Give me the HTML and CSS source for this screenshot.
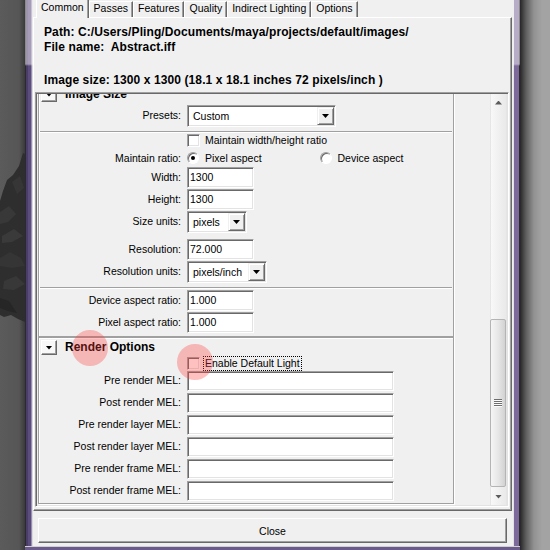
FILE: index.html
```html
<!DOCTYPE html>
<html lang="en">
<head>
    <meta charset="UTF-8">
    <title>Render Settings</title>
    <link rel="stylesheet" href="styles.css">
</head>
<body>
    <div class="desk">
        <div class="desk-left">
            <!-- dark flower peeking out behind the window -->
            <svg class="flower" width="25" height="550" viewBox="0 0 25 550">
                <polygon points="23,153 25,154 25,322 18,319 11,315 4,317 0,315 0,201 3,191 7,180 13,175 19,166" fill="#2e2e2e"/>
                <polygon points="0,212 9,206 16,214 8,222 0,224" fill="#383838"/>
                <polygon points="2,236 14,229 23,236 12,242 2,243" fill="#3a3a3a"/>
                <polygon points="0,258 10,252 21,258 25,266 12,268 0,266" fill="#353535"/>
                <polygon points="4,281 16,276 25,284 14,290 3,289" fill="#383838"/>
                <polygon points="0,298 9,301 17,313 8,311 0,308" fill="#262626"/>
                <polygon points="12,182 20,176 24,188 17,194" fill="#363636"/>
            </svg>
        </div>

        <div class="win">
            <div class="win-body">
                <div class="edge edge-l"></div>

                <div class="client">
                    <div class="tabs">
                        <div class="tab active">Common</div>
                        <div class="tab">Passes</div>
                        <div class="tab">Features</div>
                        <div class="tab">Quality</div>
                        <div class="tab">Indirect Lighting</div>
                        <div class="tab">Options</div>
                    </div>

                    <div class="page">
                        <div class="info">
                            <p>Path: C:/Users/Pling/Documents/maya/projects/default/images/</p>
                            <p>File name:&nbsp; Abstract.iff</p>
                            <p class="size-line">Image size: 1300 x 1300 (18.1 x 18.1 inches 72 pixels/inch )</p>
                        </div>

                        <div class="scroll">
                            <div class="scroll-view">
                                <div class="scroll-content">

                                    <div class="frame">
                                        <div class="frame-head">
                                            <div class="fold"><i class="tri"></i></div>
                                            <span class="frame-title">Image Size</span>
                                        </div>
                                        <div class="section presets">
                                            <div class="row">
                                                <span class="label">Presets:</span>
                                                <div class="combo w-presets">
                                                    <span class="combo-text">Custom</span>
                                                    <span class="combo-btn"><i class="tri"></i></span>
                                                </div>
                                            </div>
                                        </div>
                                        <div class="section sep dims">
                                            <div class="row r-check">
                                                <span class="label"></span>
                                                <span class="check"></span>
                                                <span class="cap">Maintain width/height ratio</span>
                                            </div>
                                            <div class="row r-radio">
                                                <span class="label">Maintain ratio:</span>
                                                <span class="opt">
                                                    <span class="radio on"></span>
                                                    <span class="cap">Pixel aspect</span>
                                                </span>
                                                <span class="opt">
                                                    <span class="radio"></span>
                                                    <span class="cap">Device aspect</span>
                                                </span>
                                            </div>
                                            <div class="row">
                                                <span class="label">Width:</span>
                                                <span class="field w-num">1300</span>
                                            </div>
                                            <div class="row">
                                                <span class="label">Height:</span>
                                                <span class="field w-num">1300</span>
                                            </div>
                                            <div class="row">
                                                <span class="label">Size units:</span>
                                                <div class="combo w-units">
                                                    <span class="combo-text">pixels</span>
                                                    <span class="combo-btn"><i class="tri"></i></span>
                                                </div>
                                            </div>
                                            <div class="row gap-top">
                                                <span class="label">Resolution:</span>
                                                <span class="field w-num">72.000</span>
                                            </div>
                                            <div class="row">
                                                <span class="label">Resolution units:</span>
                                                <div class="combo w-resunits">
                                                    <span class="combo-text">pixels/inch</span>
                                                    <span class="combo-btn"><i class="tri"></i></span>
                                                </div>
                                            </div>
                                        </div>
                                        <div class="section sep aspect">
                                            <div class="row">
                                                <span class="label">Device aspect ratio:</span>
                                                <span class="field w-num">1.000</span>
                                            </div>
                                            <div class="row">
                                                <span class="label">Pixel aspect ratio:</span>
                                                <span class="field w-num">1.000</span>
                                            </div>
                                        </div>
                                    </div>

                                    <div class="frame">
                                        <div class="frame-head">
                                            <div class="fold"><i class="tri"></i></div>
                                            <span class="frame-title">Render Options</span>
                                        </div>
                                        <div class="row r-light">
                                            <span class="label"></span>
                                            <span class="check"></span>
                                            <span class="cap focus">Enable Default Light</span>
                                        </div>
                                        <div class="row mel">
                                            <span class="label">Pre render MEL:</span>
                                            <span class="field w-mel"></span>
                                        </div>
                                        <div class="row mel">
                                            <span class="label">Post render MEL:</span>
                                            <span class="field w-mel"></span>
                                        </div>
                                        <div class="row mel">
                                            <span class="label">Pre render layer MEL:</span>
                                            <span class="field w-mel"></span>
                                        </div>
                                        <div class="row mel">
                                            <span class="label">Post render layer MEL:</span>
                                            <span class="field w-mel"></span>
                                        </div>
                                        <div class="row mel">
                                            <span class="label">Pre render frame MEL:</span>
                                            <span class="field w-mel"></span>
                                        </div>
                                        <div class="row mel">
                                            <span class="label">Post render frame MEL:</span>
                                            <span class="field w-mel"></span>
                                        </div>
                                    </div>

                                </div>
                            </div>

                            <div class="vbar">
                                <div class="vbar-btn"><i class="arrow up"></i></div>
                                <div class="vbar-gap"></div>
                                <div class="thumb"><i class="grip"></i></div>
                                <div class="vbar-rest"></div>
                                <div class="vbar-btn"><i class="arrow"></i></div>
                            </div>
                        </div>
                    </div>

                    <div class="close-row">
                        <button class="btn">Close</button>
                    </div>
                </div>

                <div class="edge edge-r"></div>
            </div>
            <div class="win-bottom"></div>
        </div>

        <div class="desk-right"></div>
    </div>

    <!-- click markers from the screen recorder -->
    <div class="click c1"></div>
    <div class="click c2"></div>
</body>
</html>
```

FILE: styles.css
```css
body {
    margin: 0;
    font-family: 'Liberation Sans', Arial, sans-serif;
    font-size: 10.5px;
    color: #000;
    background: #5a5a5a;
}

.desk {
    display: flex;
    width: 550px;
    height: 550px;
    overflow: hidden;
}

.desk-left {
    width: 25px;
    flex: none;
    background: linear-gradient(to right, #5b5b5b 0, #565656 19px, #3a3a3a 25px);
}

.flower {
    display: block;
}

.desk-right {
    width: 30px;
    flex: none;
    background: linear-gradient(to right, #262626 0, #5e5e5e 6px, #929292 14px, #a3a3a3 22px, #a3a3a3 100%);
}

/* window chrome */
.win {
    width: 495px;
    flex: none;
    display: flex;
    flex-direction: column;
}

.win-body {
    display: flex;
    flex: 1;
}

.edge {
    flex: none;
}

.edge-l {
    width: 8px;
    background:
        linear-gradient(to bottom, rgba(255,255,255,0.45) 0, rgba(255,255,255,0.45) 64px, rgba(255,255,255,0) 66px),
        linear-gradient(to right, #2d2934 0 1px, #4a3e66 1px 3px, #5b4d7d 3px 6px, #978fab 6px 7px, #dadada 7px 8px);
}

.edge-r {
    width: 7px;
    background:
        linear-gradient(to bottom, rgba(255,255,255,0.45) 0, rgba(255,255,255,0.45) 64px, rgba(255,255,255,0) 66px),
        linear-gradient(to right, #e2e2e2 0 1px, #7d6a9a 1px 6px, #2a2a2a 6px 7px);
}

.win-bottom {
    height: 4px;
    background: linear-gradient(to bottom, #cfcfcf 0 1px, #6b5a8c 1px);
}

.client {
    width: 480px;
    flex: none;
    display: flex;
    flex-direction: column;
    background: #f0f0f0;
}

/* tab strip */
.tabs {
    display: flex;
    align-items: flex-end;
    height: 17px;
    padding-left: 3px;
}

.tab {
    height: 15px;
    line-height: 13px;
    padding: 0 4px;
    border-top: 1px solid #fff;
    border-left: 1px solid #fff;
    border-right: 1px solid #696969;
    box-shadow: inset -1px 0 0 #a0a0a0;
    white-space: nowrap;
}

.tab.active {
    position: relative;
    z-index: 1;
    height: 18px;
    line-height: 14px;
    margin-bottom: -1px;
    background: #f0f0f0;
}

.page {
    box-sizing: border-box;
    width: 479px;
    height: 494px;
    border-top: 1px solid #fff;
    border-left: 1px solid #fff;
    border-right: 1px solid #696969;
    border-bottom: 1px solid #696969;
    box-shadow: inset -1px -1px 0 #a0a0a0;
}

.info {
    padding: 7px 0 0 10px;
    font-size: 12px;
    font-weight: bold;
    line-height: 15px;
    letter-spacing: 0.1px;
}

.info p {
    margin: 0;
}

.info .size-line {
    margin-top: 18px;
}

/* sunken scroll area */
.scroll {
    box-sizing: border-box;
    display: flex;
    width: 474px;
    height: 415px;
    margin: 4px 0 0 1px;
    padding: 1px;
    border: 1px solid;
    border-color: #a0a0a0 #fff #fff #a0a0a0;
    box-shadow: inset 1px 1px 0 #696969, inset -1px -1px 0 #e3e3e3;
}

.scroll-view {
    flex: 1;
    overflow: hidden;
    padding-left: 1px;
}

.scroll-content {
    width: 416px;
    margin-top: -10px;
}

.vbar {
    width: 17px;
    flex: none;
    display: flex;
    flex-direction: column;
    background: linear-gradient(to right, #e6e6e6 0 1px, #f8f8f8 1px, #f0f0f0 9px, #e9e9e9 16px, #e2e2e2 17px);
}

.vbar-btn {
    height: 17px;
    display: flex;
    align-items: center;
    justify-content: center;
}

.vbar-gap {
    height: 208px;
}

.vbar-rest {
    flex: 1;
}

.thumb {
    box-sizing: border-box;
    width: 16px;
    height: 168px;
    border: 1px solid #b4b4b4;
    border-radius: 2px;
    background: linear-gradient(to right, #f5f5f5, #e7e7e7 50%, #d2d2d2);
    display: flex;
    align-items: center;
    justify-content: center;
}

.grip {
    display: block;
    width: 8px;
    height: 8px;
    background: repeating-linear-gradient(to bottom, #6e6e6e 0 1px, #fbfbfb 1px 2px);
}

.arrow {
    display: block;
    width: 7px;
    height: 4px;
    background: #5c5c5c;
    clip-path: polygon(0 0, 100% 0, 50% 100%);
}

.arrow.up {
    clip-path: polygon(50% 0, 100% 100%, 0 100%);
}

/* collapsible frames */
.frame {
    padding: 1px;
    border: 1px solid #a0a0a0;
    box-shadow: inset 1px 1px 0 #fff, 1px 1px 0 #fff;
}

.frame-head {
    display: flex;
    height: 17px;
}

.fold {
    box-sizing: border-box;
    width: 16px;
    height: 15px;
    margin: 1px 0 0 1px;
    border: 1px solid;
    border-color: #fff #696969 #696969 #fff;
    box-shadow: inset -1px -1px 0 #a0a0a0;
    background: #f8f8f8;
    display: flex;
    align-items: center;
    justify-content: center;
}

.tri {
    display: block;
    width: 7px;
    height: 4px;
    background: #000;
    clip-path: polygon(0 0, 100% 0, 50% 100%);
}

.frame-title {
    margin-left: 8px;
    font-size: 12px;
    font-weight: bold;
    line-height: 16px;
}

.sep {
    border-top: 1px solid #a0a0a0;
    box-shadow: inset 0 1px 0 #fff;
}

.presets {
    padding: 2px 0 4px;
}

.dims {
    padding-bottom: 4px;
}

.aspect {
    padding: 2px 0 1px;
}

.row {
    display: flex;
    align-items: flex-start;
    height: 22px;
}

.row.gap-top {
    margin-top: 6px;
}

.label {
    flex: none;
    width: 141px;
    margin-right: 6px;
    text-align: right;
    line-height: 21px;
    white-space: nowrap;
}

.r-check {
    height: 17px;
    align-items: center;
}

.r-radio {
    height: 18px;
    align-items: center;
}

.r-light {
    height: 14px;
    align-items: center;
}

.r-check .label,
.r-radio .label,
.r-light .label {
    line-height: 14px;
}

/* text fields and option menus */
.field {
    box-sizing: border-box;
    height: 21px;
    padding: 0 2px;
    line-height: 19px;
    background: #fff;
    border: 1px solid;
    border-color: #a0a0a0 #fff #fff #a0a0a0;
    box-shadow: inset 1px 1px 0 #696969, inset -1px -1px 0 #e3e3e3;
}

.w-num {
    width: 67px;
}

.mel .field {
    height: 20px;
    margin-top: 1px;
}

.w-mel {
    width: 207px;
}

.combo {
    box-sizing: border-box;
    display: flex;
    height: 22px;
    padding: 1px;
    background: #fff;
    border: 1px solid;
    border-color: #a0a0a0 #fff #fff #a0a0a0;
    box-shadow: inset 1px 1px 0 #696969, inset -1px -1px 0 #e3e3e3;
}

.combo-text {
    flex: 1;
    padding-left: 4px;
    line-height: 18px;
    white-space: nowrap;
}

.combo-btn {
    box-sizing: border-box;
    width: 17px;
    height: 18px;
    border: 1px solid;
    border-color: #f0f0f0 #696969 #696969 #f0f0f0;
    box-shadow: inset 1px 1px 0 #fff, inset -1px -1px 0 #a0a0a0;
    background: #f0f0f0;
    display: flex;
    align-items: center;
    justify-content: center;
}

.w-presets {
    width: 149px;
}

.w-units {
    width: 60px;
}

.w-resunits {
    width: 80px;
}

.check {
    flex: none;
    box-sizing: border-box;
    width: 13px;
    height: 13px;
    background: #fff;
    border: 1px solid;
    border-color: #a0a0a0 #fff #fff #a0a0a0;
    box-shadow: inset 1px 1px 0 #696969, inset -1px -1px 0 #e3e3e3;
}

.opt {
    display: flex;
    align-items: center;
    width: 140px;
}

.radio {
    flex: none;
    position: relative;
    box-sizing: border-box;
    width: 12px;
    height: 12px;
    border-radius: 50%;
    background: #fff;
    border: 1px solid;
    border-color: #a0a0a0 #fff #fff #a0a0a0;
    box-shadow: inset 1px 1px 0 #696969;
}

.radio.on::after {
    content: '';
    position: absolute;
    left: 3px;
    top: 3px;
    width: 4px;
    height: 4px;
    border-radius: 50%;
    background: #000;
}

.cap {
    margin-left: 3px;
    padding: 0 1px;
    border: 1px dotted transparent;
    line-height: 13px;
    white-space: nowrap;
}

.opt .cap {
    margin-left: 4px;
}

.cap.focus {
    border-color: #000;
}

/* bottom button */
.close-row {
    margin: 7px 0 0 5px;
}

.btn {
    box-sizing: border-box;
    width: 469px;
    height: 25px;
    padding: 0;
    font-family: inherit;
    font-size: 10.5px;
    color: #000;
    background: #f0f0f0;
    border: 1px solid;
    border-color: #fff #696969 #696969 #fff;
    box-shadow: inset -1px -1px 0 #a0a0a0;
}

.click {
    position: absolute;
    width: 36px;
    height: 36px;
    border-radius: 50%;
    background: rgba(255, 60, 60, 0.32);
}

.c1 {
    left: 72px;
    top: 330px;
}

.c2 {
    left: 177px;
    top: 344px;
}
```
